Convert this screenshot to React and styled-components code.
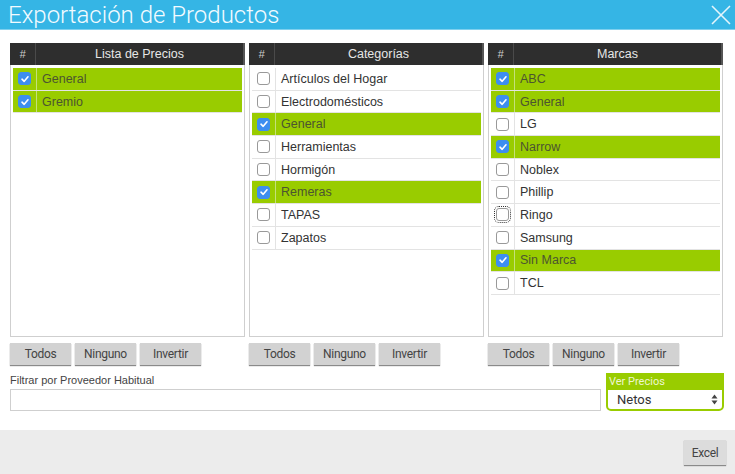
import styled, { createGlobalStyle } from "styled-components"

const Global = createGlobalStyle`
  html, body { margin: 0; padding: 0; background: #fff; }
  body { font-family: "Liberation Sans", Arial, sans-serif; }
`

const Ventana = styled.div`
  width: 735px;
  height: 474px;
  display: flex;
  flex-direction: column;
  background: #fff;
`

const Titulo = styled.div`
  height: 29px;
  border-bottom: 1px solid #7fd0ee;
  background: #35b5e5;
  display: flex;
  align-items: center;
  justify-content: space-between;
  padding: 0 3px 0 8px;
  color: #f2fbff;
  font-family: Roboto, sans-serif;
  font-weight: 300;
  font-size: 24px;
`

const Cuerpo = styled.div`
  flex: 1;
  padding: 13px 11px 0 10px;
  display: flex;
  flex-direction: column;
`

const Columnas = styled.div`
  display: grid;
  grid-template-columns: repeat(3, 235px);
  gap: 4px;
`

const Columna = styled.div`
  display: flex;
  flex-direction: column;
  gap: 6px;
`

const Panel = styled.div`
  height: 294px;
  box-sizing: border-box;
  border: 1px solid #cfcfcf;
  border-top: none;
  background: #fff;
`

const Cabecera = styled.div`
  height: 22px;
  background: #2e2e2e;
  display: flex;
  color: #e6e6e6;
  font-size: 12.5px;
  margin: 0 -1px;
  border-right: 2px solid #555;
`

const Hash = styled.div`
  width: 25px;
  border-right: 1px solid #4a4a4a;
  display: flex;
  align-items: center;
  justify-content: center;
  font-style: italic;
  font-size: 11px;
  color: #ccc;
`

const CabTitulo = styled.div`
  flex: 1;
  display: flex;
  align-items: center;
  justify-content: center;
`

const Lista = styled.div`
  padding: 3px 2px 0 2px;
`

const Fila = styled.div`
  height: 21.7px;
  display: flex;
  border-bottom: 1px solid #e3e3e3;
  background: ${p => (p.$on ? "#99cc00" : "#fff")};
  color: ${p => (p.$on ? "#4c5530" : "#333")};
  font-size: 12.5px;
`

const CeldaCheck = styled.div`
  width: 23px;
  border-right: 1px solid ${p => (p.$on ? "#c4e07a" : "#e3e3e3")};
  display: flex;
  align-items: center;
  justify-content: center;
`

const Caja = styled.span`
  width: 13px;
  height: 13px;
  border-radius: 3px;
  box-sizing: border-box;
  border: 1px solid ${p => (p.$on ? "#3d8ef0" : "#999")};
  background: ${p => (p.$on ? "#3d8ef0" : "#fff")};
  display: flex;
  align-items: center;
  justify-content: center;
  outline: ${p => (p.$focus ? "1px dotted #333" : "none")};
  outline-offset: 1px;
`

const Texto = styled.div`
  flex: 1;
  display: flex;
  align-items: center;
  padding-left: 5px;
`

const Botonera = styled.div`
  display: flex;
  gap: 4px;
`

const Boton = styled.button`
  width: 61px;
  height: 22px;
  border: none;
  border-radius: 0;
  background: #d2d2d2;
  box-shadow: 0 1px 1px #8a8a8a;
  color: #444;
  font-family: Roboto, sans-serif;
  font-size: 12px;
  letter-spacing: -0.3px;
  padding: 0;
`

const Filtros = styled.div`
  margin-top: 8px;
  display: flex;
  align-items: flex-end;
  gap: 5px;
`

const CampoProveedor = styled.div`
  flex: 1;
  display: flex;
  flex-direction: column;
`

const Etiqueta = styled.label`
  font-size: 11px;
  color: #444;
  margin-bottom: 3px;
`

const Entrada = styled.div`
  height: 22px;
  box-sizing: border-box;
  border: 1px solid #cfcfcf;
`

const CampoPrecios = styled.div`
  width: 118px;
  display: flex;
  flex-direction: column;
`

const EtiquetaVerde = styled.div`
  height: 16px;
  background: #99cc00;
  color: #eef7d0;
  font-family: Roboto, sans-serif;
  font-size: 11px;
  padding-left: 3px;
  display: flex;
  align-items: center;
`

const Selector = styled.div`
  height: 22px;
  box-sizing: border-box;
  border: 2px solid #99cc00;
  border-top-width: 1px;
  border-radius: 0 0 5px 5px;
  display: flex;
  align-items: center;
  justify-content: space-between;
  padding: 0 4px 0 9px;
  font-family: Roboto, sans-serif;
  font-size: 13px;
  color: #333;
`

const Pie = styled.div`
  margin-top: auto;
  height: 44px;
  background: #ececec;
  display: flex;
  justify-content: flex-end;
  align-items: flex-start;
  padding: 10px 9px 0 0;
  box-sizing: border-box;
`

const BotonPie = styled(Boton)`
  width: 42px;
  height: 25px;
  background: #dcdcdc;
`

const Check = () => (
  <svg width="10" height="10" viewBox="0 0 10 10">
    <path d="M2 5.2 L4.2 7.3 L8 2.8" fill="none" stroke="#fff" strokeWidth="1.6" strokeLinecap="round" strokeLinejoin="round" />
  </svg>
)

const Cerrar = () => (
  <svg width="22" height="22" viewBox="0 0 22 22">
    <path d="M2 2 L20 20 M20 2 L2 20" stroke="#e3f5fc" strokeWidth="1.6" fill="none" />
  </svg>
)

const listas = [
  {
    titulo: "Lista de Precios",
    items: [["General", true], ["Gremio", true]],
  },
  {
    titulo: "Categorías",
    items: [
      ["Artículos del Hogar", false],
      ["Electrodomésticos", false],
      ["General", true],
      ["Herramientas", false],
      ["Hormigón", false],
      ["Remeras", true],
      ["TAPAS", false],
      ["Zapatos", false],
    ],
  },
  {
    titulo: "Marcas",
    items: [
      ["ABC", true],
      ["General", true],
      ["LG", false],
      ["Narrow", true],
      ["Noblex", false],
      ["Phillip", false],
      ["Ringo", false, true],
      ["Samsung", false],
      ["Sin Marca", true],
      ["TCL", false],
    ],
  },
]

export default function App() {
  return (
    <Ventana>
      <Global />
      <Titulo>
        <span>Exportación de Productos</span>
        <Cerrar />
      </Titulo>
      <Cuerpo>
        <Columnas>
          {listas.map(l => (
            <Columna key={l.titulo}>
              <Panel>
                <Cabecera>
                  <Hash>#</Hash>
                  <CabTitulo>{l.titulo}</CabTitulo>
                </Cabecera>
                <Lista>
                  {l.items.map(([nombre, on, foco]) => (
                    <Fila key={nombre} $on={on}>
                      <CeldaCheck $on={on}>
                        <Caja $on={on} $focus={foco}>{on && <Check />}</Caja>
                      </CeldaCheck>
                      <Texto>{nombre}</Texto>
                    </Fila>
                  ))}
                </Lista>
              </Panel>
              <Botonera>
                <Boton>Todos</Boton>
                <Boton>Ninguno</Boton>
                <Boton>Invertir</Boton>
              </Botonera>
            </Columna>
          ))}
        </Columnas>
        <Filtros>
          <CampoProveedor>
            <Etiqueta>Filtrar por Proveedor Habitual</Etiqueta>
            <Entrada />
          </CampoProveedor>
          <CampoPrecios>
            <EtiquetaVerde>Ver Precios</EtiquetaVerde>
            <Selector>
              <span>Netos</span>
              <svg width="7" height="11" viewBox="0 0 7 11">
                <path d="M3.5 0.5 L6.5 4.5 H0.5 Z M3.5 10.5 L6.5 6.5 H0.5 Z" fill="#444" />
              </svg>
            </Selector>
          </CampoPrecios>
        </Filtros>
      </Cuerpo>
      <Pie>
        <BotonPie>Excel</BotonPie>
      </Pie>
    </Ventana>
  )
}
